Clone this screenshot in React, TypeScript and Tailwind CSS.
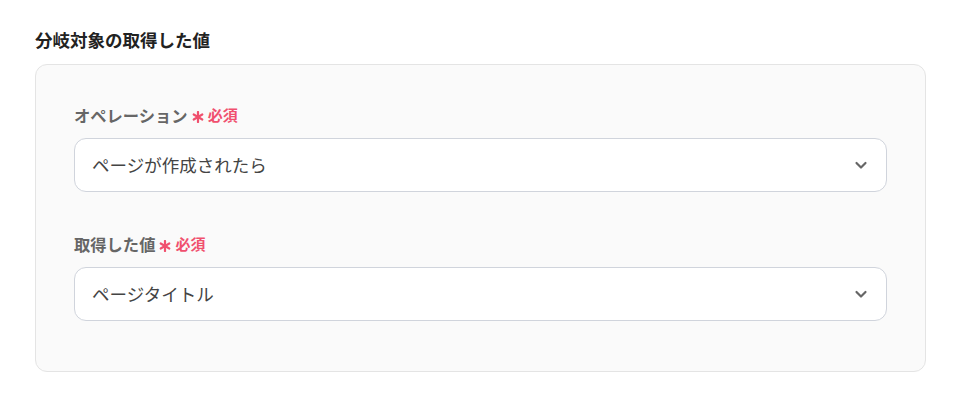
import React from 'react';

const font = { fontFamily: '"Noto Sans CJK JP", "Noto Sans", sans-serif' };

function Chevron() {
  return (
    <svg width="16" height="16" viewBox="0 0 16 16" fill="none" className="text-[#666]">
      <path d="M3.5 6 L8 10.5 L12.5 6" stroke="currentColor" strokeWidth="2.2" strokeLinecap="round" strokeLinejoin="round" />
    </svg>
  );
}

function Asterisk() {
  return (
    <svg width="12" height="12" viewBox="0 0 12 12" className="text-[#f0506e]">
      <g stroke="currentColor" strokeWidth="2.2" strokeLinecap="round">
        <path d="M6 1 V11" />
        <path d="M1.7 3.5 L10.3 8.5" />
        <path d="M1.7 8.5 L10.3 3.5" />
      </g>
    </svg>
  );
}

function Field({ label, value, className }: { label: string; value: string; className?: string }) {
  return (
    <div className={className}>
      {/* ラベル */}
      <div className="flex items-center h-[22px] mb-[12px]">
        <span className="text-[16.3px] font-bold text-[#666] leading-[22px]">{label}</span>
        <span className="ml-[4px] mt-[4px]">
          <Asterisk />
        </span>
        <span className="ml-[4px] text-[#f0506e] text-[15px] font-bold leading-[22px]">必須</span>
      </div>
      {/* セレクト */}
      <div className="flex items-center justify-between h-[54px] bg-white border border-[#d0d4dc] rounded-[12px] pl-[17px] pr-[17px]">
        <span className="text-[17.5px] text-[#444]">{value}</span>
        <Chevron />
      </div>
    </div>
  );
}

export default function App() {
  return (
    <div className="min-h-screen bg-white px-[35px] pt-[28px]" style={font}>
      <h2 className="text-[17.5px] font-bold text-[#222] leading-[24px] mb-[12px]">分岐対象の取得した値</h2>
      <div className="w-[891px] bg-[#fafafa] border border-[#e4e4e4] rounded-[12px] px-[38px] pt-[39px] pb-[50px]">
        <Field label="オペレーション" value="ページが作成されたら" />
        <Field label="取得した値" value="ページタイトル" className="mt-[41px]" />
      </div>
    </div>
  );
}
